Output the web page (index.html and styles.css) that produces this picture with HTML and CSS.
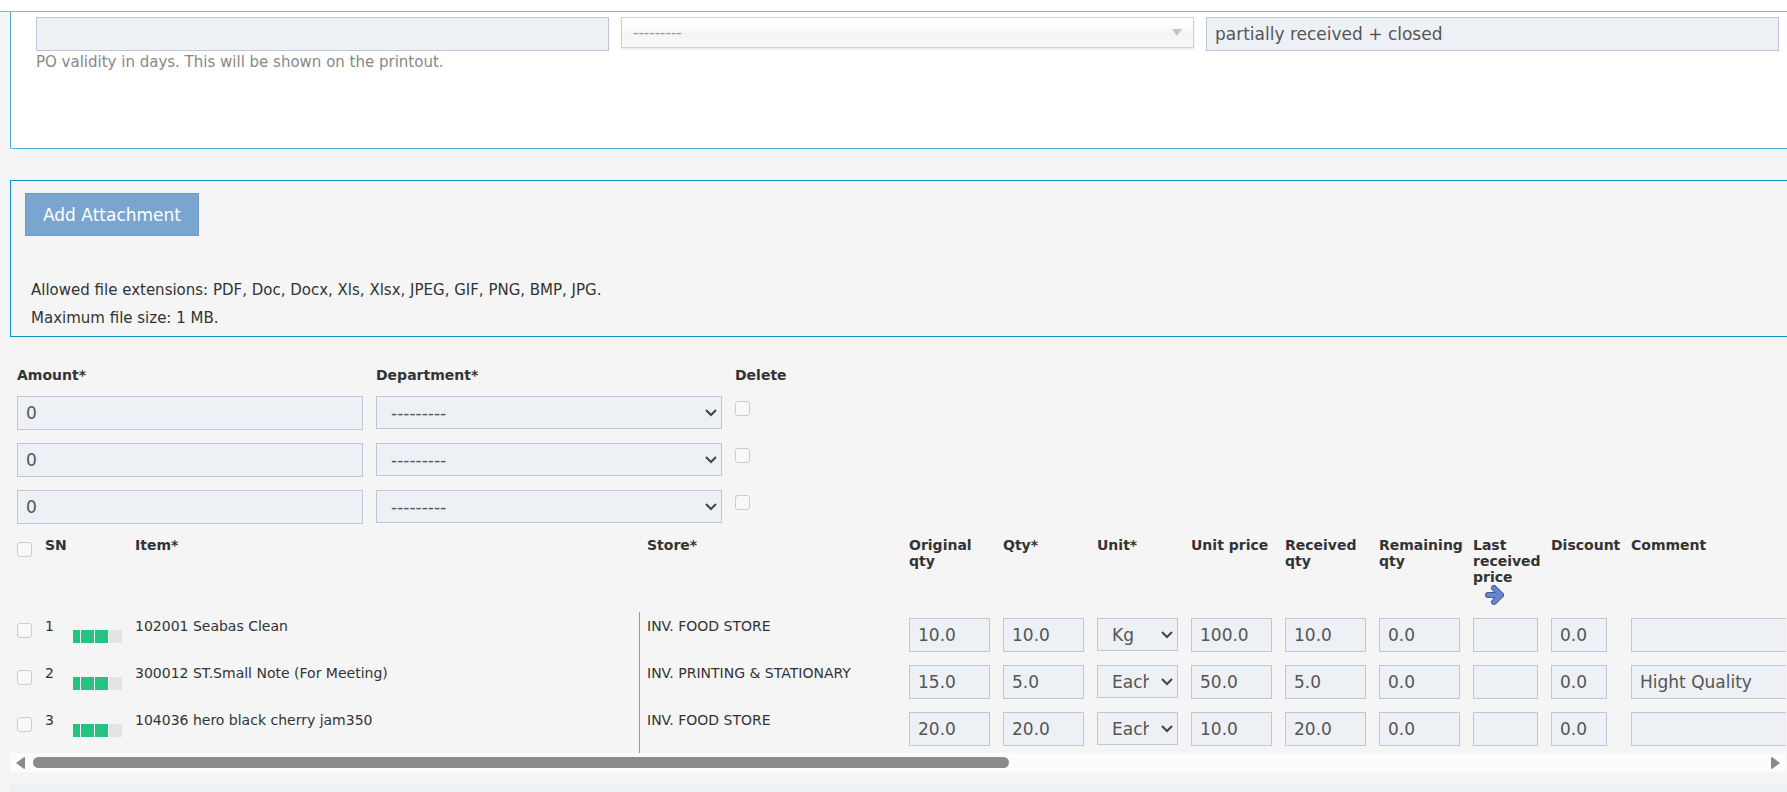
FILE: index.html
```
<!DOCTYPE html>
<html lang="en">
<head>
    <meta charset="UTF-8">
    <meta name="viewport" content="width=device-width, initial-scale=1.0">
    <title>Purchase Order</title>
    <link rel="stylesheet" href="styles.css">
</head>
<body>
    <header class="topbar"></header>
    <main class="content">
        <section class="panel">
            <div class="field">
                <input type="text" id="validity" class="control" aria-label="PO validity" aria-describedby="validity-help">
                <p class="help" id="validity-help">PO validity in days. This will be shown on the printout.</p>
            </div>
            <div class="field chosen">
                <select class="chosen-select" aria-label="Type">
                    <option>---------</option>
                </select>
            </div>
            <div class="field">
                <input type="text" class="control" aria-label="Status" value="partially received + closed">
            </div>
        </section>

        <section class="attachments">
            <button type="button" class="btn">Add Attachment</button>
            <p>Allowed file extensions: PDF, Doc, Docx, Xls, Xlsx, JPEG, GIF, PNG, BMP, JPG.</p>
            <p>Maximum file size: 1 MB.</p>
        </section>

        <table class="grid departments">
            <colgroup>
                <col class="col-amount">
                <col class="col-amount">
                <col class="col-delete">
            </colgroup>
            <thead>
                <tr>
                    <th>Amount*</th>
                    <th>Department*</th>
                    <th>Delete</th>
                </tr>
            </thead>
            <tbody>
                <tr>
                    <td><input type="text" class="control" aria-label="Amount 1" value="0"></td>
                    <td><select class="control" aria-label="Department 1"><option>---------</option></select></td>
                    <td><input type="checkbox" class="check" aria-label="Delete 1"></td>
                </tr>
                <tr>
                    <td><input type="text" class="control" aria-label="Amount 2" value="0"></td>
                    <td><select class="control" aria-label="Department 2"><option>---------</option></select></td>
                    <td><input type="checkbox" class="check" aria-label="Delete 2"></td>
                </tr>
                <tr>
                    <td><input type="text" class="control" aria-label="Amount 3" value="0"></td>
                    <td><select class="control" aria-label="Department 3"><option>---------</option></select></td>
                    <td><input type="checkbox" class="check" aria-label="Delete 3"></td>
                </tr>
            </tbody>
        </table>

        <div class="items-wrap">
            <table class="grid items">
                <colgroup>
                    <col class="col-check">
                    <col class="col-sn">
                    <col class="col-rating">
                    <col class="col-item">
                    <col class="col-store">
                    <col class="col-num">
                    <col class="col-num">
                    <col class="col-num">
                    <col class="col-num">
                    <col class="col-num">
                    <col class="col-num">
                    <col class="col-last">
                    <col class="col-discount">
                    <col class="col-comment">
                </colgroup>
                <thead>
                    <tr>
                        <th><input type="checkbox" class="check" aria-label="Select all"></th>
                        <th>SN</th>
                        <th></th>
                        <th>Item*</th>
                        <th class="store">Store*</th>
                        <th>Original qty</th>
                        <th>Qty*</th>
                        <th>Unit*</th>
                        <th>Unit price</th>
                        <th>Received qty</th>
                        <th>Remaining qty</th>
                        <th>Last received price
                            <svg class="arrow" width="20" height="20" viewBox="0 0 20 20">
                                <path d="M3 10H16M9 3L16 10L9 17" fill="none" stroke="#4a5a8c" stroke-width="6" stroke-linecap="round" stroke-linejoin="round"/>
                                <path d="M3 10H16M9 3L16 10L9 17" fill="none" stroke="#6585d6" stroke-width="4" stroke-linecap="round" stroke-linejoin="round"/>
                            </svg>
                        </th>
                        <th>Discount</th>
                        <th>Comment</th>
                    </tr>
                </thead>
                <tbody>
                    <tr>
                        <td><input type="checkbox" class="check" aria-label="Select item 1"></td>
                        <td>1</td>
                        <td><div class="rating"><i class="half"></i><i></i><i></i><i class="off"></i></div></td>
                        <td>102001 Seabas Clean</td>
                        <td class="store">INV. FOOD STORE</td>
                        <td><input type="text" class="control" aria-label="Original qty 1" value="10.0"></td>
                        <td><input type="text" class="control" aria-label="Qty 1" value="10.0"></td>
                        <td><select class="control" aria-label="Unit 1"><option>Kg</option></select></td>
                        <td><input type="text" class="control" aria-label="Unit price 1" value="100.0"></td>
                        <td><input type="text" class="control" aria-label="Received qty 1" value="10.0"></td>
                        <td><input type="text" class="control" aria-label="Remaining qty 1" value="0.0"></td>
                        <td><input type="text" class="control" aria-label="Last received price 1"></td>
                        <td><input type="text" class="control discount" aria-label="Discount 1" value="0.0"></td>
                        <td><input type="text" class="control" aria-label="Comment 1"></td>
                    </tr>
                    <tr>
                        <td><input type="checkbox" class="check" aria-label="Select item 2"></td>
                        <td>2</td>
                        <td><div class="rating"><i class="half"></i><i></i><i></i><i class="off"></i></div></td>
                        <td>300012 ST.Small Note (For Meeting)</td>
                        <td class="store">INV. PRINTING &amp; STATIONARY</td>
                        <td><input type="text" class="control" aria-label="Original qty 2" value="15.0"></td>
                        <td><input type="text" class="control" aria-label="Qty 2" value="5.0"></td>
                        <td><select class="control" aria-label="Unit 2"><option>Each</option></select></td>
                        <td><input type="text" class="control" aria-label="Unit price 2" value="50.0"></td>
                        <td><input type="text" class="control" aria-label="Received qty 2" value="5.0"></td>
                        <td><input type="text" class="control" aria-label="Remaining qty 2" value="0.0"></td>
                        <td><input type="text" class="control" aria-label="Last received price 2"></td>
                        <td><input type="text" class="control discount" aria-label="Discount 2" value="0.0"></td>
                        <td><input type="text" class="control" aria-label="Comment 2" value="Hight Quality"></td>
                    </tr>
                    <tr>
                        <td><input type="checkbox" class="check" aria-label="Select item 3"></td>
                        <td>3</td>
                        <td><div class="rating"><i class="half"></i><i></i><i></i><i class="off"></i></div></td>
                        <td>104036 hero black cherry jam350</td>
                        <td class="store">INV. FOOD STORE</td>
                        <td><input type="text" class="control" aria-label="Original qty 3" value="20.0"></td>
                        <td><input type="text" class="control" aria-label="Qty 3" value="20.0"></td>
                        <td><select class="control" aria-label="Unit 3"><option>Each</option></select></td>
                        <td><input type="text" class="control" aria-label="Unit price 3" value="10.0"></td>
                        <td><input type="text" class="control" aria-label="Received qty 3" value="20.0"></td>
                        <td><input type="text" class="control" aria-label="Remaining qty 3" value="0.0"></td>
                        <td><input type="text" class="control" aria-label="Last received price 3"></td>
                        <td><input type="text" class="control discount" aria-label="Discount 3" value="0.0"></td>
                        <td><input type="text" class="control" aria-label="Comment 3"></td>
                    </tr>
                </tbody>
            </table>
        </div>
        <div class="scrollbar">
            <svg width="9" height="12" viewBox="0 0 9 12"><path d="M9 1V11Q9 12 8 12L0 6L8 0Q9 0 9 1Z" fill="#8b8b8b"/></svg>
            <div class="track"><div class="thumb"></div></div>
            <svg width="9" height="12" viewBox="0 0 9 12"><path d="M0 1V11Q0 12 1 12L9 6L1 0Q0 0 0 1Z" fill="#8b8b8b"/></svg>
        </div>
        <div class="totals"></div>
    </main>
</body>
</html>
```
FILE: styles.css
```
* {
    box-sizing: border-box;
}
body {
    font-family: Verdana, "DejaVu Sans", sans-serif;
    font-size: 14px;
    line-height: 16px;
    margin: 0;
    background-color: #f5f5f5;
    color: #333;
    overflow: hidden;
    height: 100vh;
}
p {
    margin: 0;
}
.topbar {
    height: 12px;
    background-color: #fff;
    border-bottom: 1px solid #aaa;
}
.content {
    padding-left: 10px;
}

/* order fields */
.panel {
    display: grid;
    grid-template-columns: repeat(3, 1fr);
    gap: 12px;
    min-height: 137px;
    padding: 5px 8px 60px 25px;
    background-color: #fff;
    border-left: 1px solid #50abe4;
    border-bottom: 1px solid #50abe4;
    border-bottom-left-radius: 2px;
}
.control {
    display: block;
    width: 100%;
    height: 34px;
    padding: 0 8px;
    font-family: inherit;
    font-size: 17px;
    color: #555;
    background-color: #edf0f5;
    border: 1px solid #bec7d8;
    border-radius: 0;
    outline: none;
}
select.control {
    appearance: none;
    height: 33px;
    padding: 0 28px 0 14px;
    background-image: url("data:image/svg+xml,%3Csvg xmlns='http://www.w3.org/2000/svg' width='12' height='8' viewBox='0 0 12 8'%3E%3Cpath d='M1 1L6 6L11 1' fill='none' stroke='%23444' stroke-width='2'/%3E%3C/svg%3E");
    background-repeat: no-repeat;
    background-position: right 4px center;
}
.help {
    font-size: 15px;
    line-height: 22px;
    color: #888;
}
.chosen {
    position: relative;
}
.chosen::after {
    content: "";
    position: absolute;
    top: 12px;
    right: 12px;
    border: 5px solid transparent;
    border-top: 7px solid #c4c4c4;
    border-bottom: 0;
    pointer-events: none;
}
.chosen-select {
    appearance: none;
    display: block;
    width: 100%;
    height: 31px;
    padding: 0 11px;
    font-family: inherit;
    font-size: 15px;
    color: #999;
    background: linear-gradient(#fff 20%, #f6f6f6 50%, #f4f4f4 52%, #fafafa 100%);
    border: 1px solid #d0d0d0;
    border-radius: 0;
    box-shadow: 0 1px 2px rgba(0, 0, 0, 0.1);
}

/* attachments */
.attachments {
    margin-top: 31px;
    padding: 12px 14px 4px;
    border: 1px solid #0c94c8;
    border-right: 0;
    font-size: 15px;
    line-height: 28px;
}
.attachments p {
    padding-left: 6px;
}
.btn {
    display: block;
    height: 43px;
    margin-bottom: 40px;
    padding: 0 17px;
    font-family: inherit;
    font-size: 17px;
    color: #fff;
    background-color: #79a5cf;
    border: 1px solid #7099c4;
}

/* tables */
.grid {
    table-layout: fixed;
    border-spacing: 0;
    margin-left: 1px;
}
.departments {
    width: 800px;
    margin-top: 24px;
}
.grid th,
.grid td {
    padding: 6px 7px 7px 6px;
    text-align: left;
    vertical-align: top;
}
.grid tbody tr {
    height: 47px;
}
.col-amount {
    width: 359px;
}
.items-wrap {
    overflow: hidden;
    margin-right: 1px;
}
.items {
    width: 3000px;
}
.col-check,
.col-sn {
    width: 28px;
}
.col-rating {
    width: 62px;
}
.col-item {
    width: 510px;
}
.col-store {
    width: 264px;
}
.col-num {
    width: 94px;
}
.col-last {
    width: 78px;
}
.col-discount {
    width: 80px;
}
.grid .store {
    padding-left: 8px;
}
.grid td.store {
    padding-left: 7px;
    border-left: 1px solid #999;
}
.discount {
    width: 56px;
}
.check {
    appearance: none;
    display: block;
    width: 15px;
    height: 15px;
    margin: 5px 0 0;
    background-color: #f8f8f8;
    border: 1px solid #ccc;
    border-radius: 3px;
}
.arrow {
    display: block;
    margin-left: 12px;
}
.rating {
    display: flex;
    gap: 1px;
    margin-top: 12px;
}
.rating i {
    width: 13px;
    height: 13px;
    background-color: #26c281;
}
.rating .half {
    width: 7px;
}
.rating .off {
    background-color: #e4e4e4;
}

/* horizontal scrollbar */
.scrollbar {
    display: flex;
    align-items: center;
    gap: 8px;
    height: 19px;
    margin-right: 1px;
    padding: 0 6px;
    background-color: #fcfcfc;
}
.track {
    flex: 1;
}
.thumb {
    width: 56.4%;
    height: 11px;
    background-color: #8b8b8b;
    border-radius: 6px;
}
.totals {
    height: 40px;
    margin-top: 12px;
    background-color: #edf0f5;
}
```
